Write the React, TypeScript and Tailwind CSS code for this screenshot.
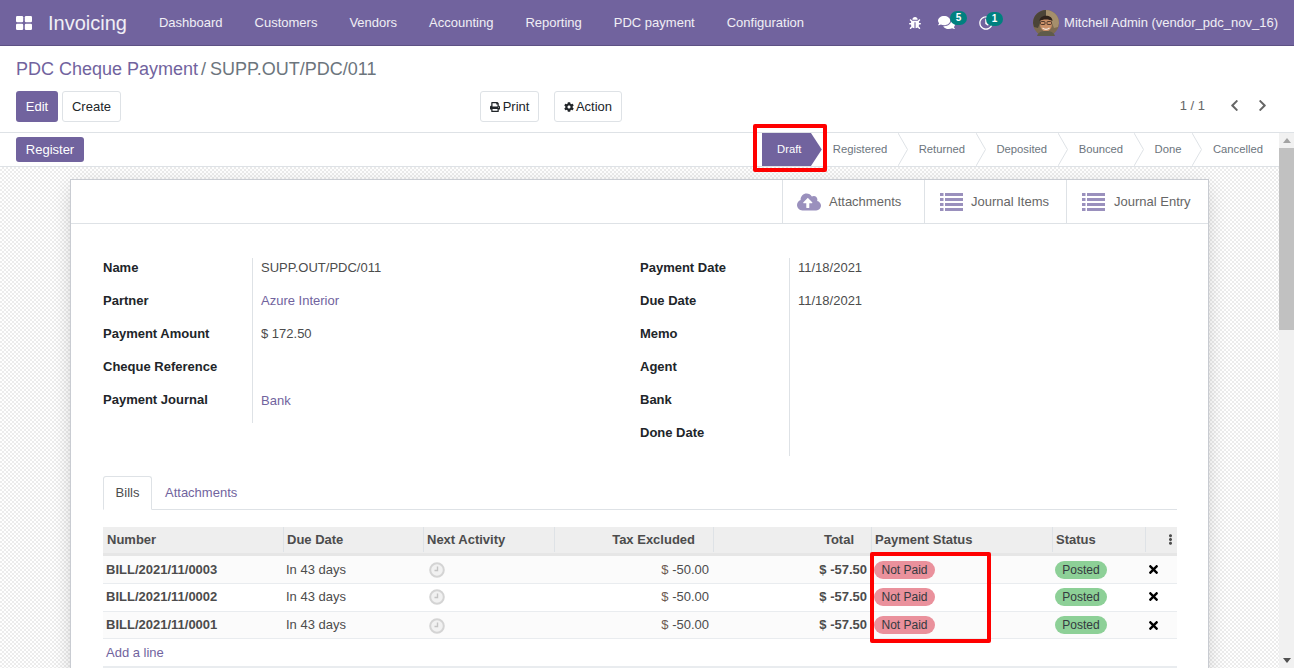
import {
  FaBug,
  FaChevronLeft,
  FaChevronRight,
  FaCloudUploadAlt,
  FaCog,
  FaComments,
  FaEllipsisV,
  FaPrint,
  FaRegClock,
  FaTimes,
} from "react-icons/fa";

const MENU = ["Dashboard", "Customers", "Vendors", "Accounting", "Reporting", "PDC payment", "Configuration"];
const STAGES = ["Registered", "Returned", "Deposited", "Bounced", "Done", "Cancelled"];
const LEFT_FIELDS: [string, string, boolean][] = [
  ["Name", "SUPP.OUT/PDC/011", false],
  ["Partner", "Azure Interior", true],
  ["Payment Amount", "$ 172.50", false],
  ["Cheque Reference", "", false],
  ["Payment Journal", "Bank", true],
];
const RIGHT_FIELDS: [string, string][] = [
  ["Payment Date", "11/18/2021"],
  ["Due Date", "11/18/2021"],
  ["Memo", ""],
  ["Agent", ""],
  ["Bank", ""],
  ["Done Date", ""],
];
const BILLS = [
  { number: "BILL/2021/11/0003", height: "h-[28px]", bg: "bg-[#fbfbfb]" },
  { number: "BILL/2021/11/0002", height: "h-[28px] pb-[2px]", bg: "bg-white" },
  { number: "BILL/2021/11/0001", height: "h-[27px]", bg: "bg-[#fbfbfb]" },
];
const COLS = "grid grid-cols-[180px_140px_131px_159px_158px_181px_93px_32px]";

function AppsIcon() {
  return (
    <svg width="16" height="14" viewBox="0 0 16 14" fill="#fff">
      <rect x="0" y="0" width="7.2" height="6.2" rx="1.2" />
      <rect x="8.8" y="0" width="7.2" height="6.2" rx="1.2" />
      <rect x="0" y="7.8" width="7.2" height="6.2" rx="1.2" />
      <rect x="8.8" y="7.8" width="7.2" height="6.2" rx="1.2" />
    </svg>
  );
}

function Avatar() {
  return (
    <svg width="26" height="26" viewBox="0 0 26 26">
      <circle cx="13" cy="13" r="13" fill="#7d6a50" />
      <path d="M0 13a13 13 0 0 1 13-13v6c-4 0-6 2-6 7l-2 5-4-1z" fill="#4b4438" />
      <path d="M26 13a13 13 0 0 0-13-13v6c4 0 6 2 6 7l2 5 4-1z" fill="#a58f6c" />
      <ellipse cx="13" cy="14" rx="6" ry="7.5" fill="#c98f68" />
      <path d="M6.500 11c0-7 13-7 13 0-3-2-10-2-13 0z" fill="#2f221b" />
      <rect x="7.500" y="11.500" width="4.500" height="3" rx="1" fill="none" stroke="#33251e" strokeWidth="0.8" />
      <rect x="14" y="11.500" width="4.500" height="3" rx="1" fill="none" stroke="#33251e" strokeWidth="0.8" />
      <path d="M9.500 18c2 1.500 5 1.500 7 0" stroke="#f5e9e0" strokeWidth="1.200" fill="none" />
      <path d="M4 26c1-4 5-5 9-5s8 1 9 5z" fill="#5f5b4a" />
    </svg>
  );
}

function ListIcon() {
  return (
    <svg width="23" height="18" viewBox="0 0 23 18" fill="#9a90bd">
      <rect x="0" y="0" width="3.500" height="3" />
      <rect x="5" y="0" width="18" height="3" />
      <rect x="0" y="5" width="3.500" height="3" />
      <rect x="5" y="5" width="18" height="3" />
      <rect x="0" y="10" width="3.500" height="3" />
      <rect x="5" y="10" width="18" height="3" />
      <rect x="0" y="15" width="3.500" height="3" />
      <rect x="5" y="15" width="18" height="3" />
    </svg>
  );
}

function ActivityIcon() {
  return (
    <svg width="16" height="16" viewBox="0 0 16 16">
      <circle cx="8" cy="8" r="6.800" fill="#f1f1f1" stroke="#d4d4d4" strokeWidth="2" />
      <path d="M8.500 4.500v4H5.500" fill="none" stroke="#c4c4c4" strokeWidth="1.400" />
    </svg>
  );
}

function StageChevron() {
  return (
    <svg width="10" height="33" viewBox="0 0 10 33" className="shrink-0">
      <path d="M0 0l9.500 16.500L0 33" fill="none" stroke="#dee2e6" strokeWidth="1" />
    </svg>
  );
}

function BoxButton({ icon, label, className }: { icon: React.ReactNode; label: string; className: string }) {
  return (
    <div className={`w-[142px] h-full border-l border-[#dee2e6] flex items-center text-[#666666] ${className}`}>
      {icon}
      <span>{label}</span>
    </div>
  );
}

function Badge({ value, className }: { value: number; className: string }) {
  return (
    <span
      className={`absolute w-[17px] h-[14px] rounded-full bg-[#00807f] text-white text-[10px] leading-[14px] font-bold text-center ${className}`}
    >
      {value}
    </span>
  );
}

export default function App() {
  return (
    <div className="relative h-[668px] w-[1294px] overflow-hidden flex flex-col bg-white text-[13px] text-[#4c4c4c] font-['Liberation_Sans',Arial,sans-serif]">
      {/* top menu */}
      <header className="h-[46px] shrink-0 bg-[#71639e] border-b border-[#5d5184] flex items-center pl-4 pr-4 text-white/90">
        <AppsIcon />
        <span className="ml-4 text-[20px] mr-4">Invoicing</span>
        <nav className="flex">
          {MENU.map((item) => (
            <span key={item} className="px-4">
              {item}
            </span>
          ))}
        </nav>
        <div className="ml-auto flex items-center">
          <FaBug className="text-white mr-[17px]" size={12} />
          <span className="relative mr-[24px]">
            <FaComments className="text-white" size={17} />
            <Badge value={5} className="-top-[3px] left-[12px]" />
          </span>
          <span className="relative mr-[40px]">
            <FaRegClock className="text-white" size={14} />
            <Badge value={1} className="-top-[4px] left-[7px]" />
          </span>
          <Avatar />
          <span className="ml-[5px]">Mitchell Admin (vendor_pdc_nov_16)</span>
        </div>
      </header>

      {/* control panel */}
      <section className="h-[87px] shrink-0 border-b border-[#dee2e6] px-4">
        <div className="pt-[12px] text-[18px] leading-[22px] text-[#6c757d]">
          <span className="text-[#71639e]">PDC Cheque Payment</span>
          <span className="ml-[3px] mr-[4px]">/</span>
          <span>SUPP.OUT/PDC/011</span>
        </div>
        <div className="mt-[11px] flex items-center">
          <button type="button" className="h-[31px] w-[42px] rounded-[3px] bg-[#71639e] text-white">
            Edit
          </button>
          <button
            type="button"
            className="ml-1 h-[31px] w-[59px] rounded-[3px] bg-white border border-[#dee2e6] text-[#212529]"
          >
            Create
          </button>
          <button
            type="button"
            className="ml-[359px] h-[31px] w-[59px] rounded-[3px] bg-white border border-[#dee2e6] text-[#212529] flex items-center justify-center gap-[3px]"
          >
            <FaPrint size={10} />
            Print
          </button>
          <button
            type="button"
            className="ml-[15px] h-[31px] w-[68px] rounded-[3px] bg-white border border-[#dee2e6] text-[#212529] flex items-center justify-center gap-[2px]"
          >
            <FaCog size={10} />
            Action
          </button>
          <div className="ml-auto -mt-[2px] flex items-center text-[#666666] pr-[9px]">
            <span className="mr-[23px]">1 / 1</span>
            <FaChevronLeft size={13} className="mr-[15px]" />
            <FaChevronRight size={13} />
          </div>
        </div>
      </section>

      <div className="flex-1 min-h-0 flex">
        <div className="flex-1 min-w-0 flex flex-col">
          {/* status bar */}
          <div className="h-[34px] shrink-0 border-b border-[#dee2e6] flex items-center pl-4">
            <button type="button" className="h-[25px] w-[68px] rounded-[3px] bg-[#71639e] text-white">
              Register
            </button>
            <div className="ml-auto flex items-center h-full text-[11.25px] text-[#6c757d] pr-4">
              <span className="w-[60px] h-full bg-[#71639e] text-white flex items-center justify-center pr-[5px] [clip-path:polygon(0_0,82%_0,100%_50%,82%_100%,0_100%)] mr-[11px]">
                Draft
              </span>
              {STAGES.map((stage, i) => (
                <div key={stage} className="flex items-center h-full">
                  <span>{stage}</span>
                  {i < STAGES.length - 1 && (
                    <span className="mx-[10.75px]">
                      <StageChevron />
                    </span>
                  )}
                </div>
              ))}
            </div>
          </div>

          {/* form */}
          <div className="flex-1 min-h-0 overflow-hidden pt-[12px] px-[70px] bg-[repeating-conic-gradient(#ececec_0%_25%,#ffffff_0%_50%)] bg-[length:4px_4px]">
            <div className="bg-white border border-[#c9ccd2] shadow-[0_5px_20px_-5px_rgba(0,0,0,0.25)]">
              <div className="h-[44px] border-b border-[#dee2e6] flex justify-end">
                <BoxButton
                  icon={<FaCloudUploadAlt size={24} className="text-[#9a90bd]" />}
                  label="Attachments"
                  className="pl-[14px] gap-2"
                />
                <BoxButton icon={<ListIcon />} label="Journal Items" className="pl-[15px] gap-2" />
                <BoxButton icon={<ListIcon />} label="Journal Entry" className="pl-[15px] gap-[9px]" />
              </div>

              <div className="pt-[34px] pl-[32px] pr-[31px]">
                <div className="flex">
                  <div className="w-[537px]">
                    {LEFT_FIELDS.map(([label, value, link]) => (
                      <div key={label} className="flex h-[33px] leading-[20px]">
                        <div className="w-[150px] font-bold text-[#212529] border-r border-[#dee2e6]">{label}</div>
                        <div className={`pl-2 ${link ? "text-[#71639e]" : ""} ${value === "Bank" ? "pt-px" : ""}`}>{value}</div>
                      </div>
                    ))}
                  </div>
                  <div>
                    {RIGHT_FIELDS.map(([label, value]) => (
                      <div key={label} className="flex h-[33px] leading-[20px]">
                        <div className="w-[150px] font-bold text-[#212529] border-r border-[#dee2e6]">{label}</div>
                        <div className="pl-2">{value}</div>
                      </div>
                    ))}
                  </div>
                </div>

                <div className="mt-[20px] h-[34px] border-b border-[#dee2e6] flex">
                  <div className="w-[49px] h-[34px] bg-white border border-[#dee2e6] border-b-white rounded-t-[3px] flex items-center justify-center">
                    Bills
                  </div>
                  <div className="ml-[13px] h-full flex items-center text-[#71639e]">Attachments</div>
                </div>

                <div className="mt-[17px]">
                  <div className={`${COLS} h-[29px] pb-px bg-[#eeeeee] border-b-[3px] border-[#e6e6e6] font-bold text-[#4c4c4c]`}>
                    <div className="pl-1 flex items-center">Number</div>
                    <div className="pl-[3px] flex items-center border-l border-[#dee2e6]">Due Date</div>
                    <div className="pl-[3px] flex items-center border-l border-[#dee2e6]">Next Activity</div>
                    <div className="pr-[18px] flex items-center justify-end border-l border-[#dee2e6]">Tax Excluded</div>
                    <div className="pr-[17px] flex items-center justify-end border-l border-[#dee2e6]">Total</div>
                    <div className="pl-[3px] flex items-center border-l border-[#dee2e6]">Payment Status</div>
                    <div className="pl-[3px] flex items-center border-l border-[#dee2e6]">Status</div>
                    <div className="flex items-center justify-end pr-px border-l border-[#dee2e6]">
                      <FaEllipsisV size={11} />
                    </div>
                  </div>
                  {BILLS.map((bill) => (
                    <div
                      key={bill.number}
                      className={`${COLS} ${bill.height} ${bill.bg} items-center border-b border-[#e9ecef]`}
                    >
                      <div className="pl-[3px] font-bold">{bill.number}</div>
                      <div className="pl-[3px]">In 43 days</div>
                      <div className="pl-[6px] pt-px">
                        <ActivityIcon />
                      </div>
                      <div className="pr-[4px] text-right">
                        <span className="text-[#6e5a54]">$</span> -50.00
                      </div>
                      <div className="pr-[4px] text-right font-bold">$ -57.50</div>
                      <div className="pl-[3px] flex items-center">
                        <span className="h-[18px] leading-[18px] w-[61px] text-center rounded-full bg-[#ea919c] text-[12px] text-[#343a40]">
                          Not Paid
                        </span>
                      </div>
                      <div className="pl-[3px] flex items-center">
                        <span className="h-[18px] leading-[18px] w-[52px] text-center rounded-full bg-[#8dd097] text-[12px] text-[#343a40]">
                          Posted
                        </span>
                      </div>
                      <div className="pl-[2px] text-black">
                        <FaTimes size={13} />
                      </div>
                    </div>
                  ))}
                  <div className="h-[29px] pl-[3px] flex items-center text-[#71639e] border-b-2 border-[#e9ecef]">
                    Add a line
                  </div>
                  <div className="h-[40px]" />
                </div>
              </div>
            </div>
          </div>
        </div>

        {/* scrollbar */}
        <div className="w-[15px] shrink-0 bg-[#f1f1f1] flex flex-col items-center">
          <div className="h-[15px] flex items-center justify-center">
            <div className="w-0 h-0 border-x-[4px] border-x-transparent border-b-[5px] border-b-[#a3a3a3]" />
          </div>
          <div className="w-full h-[182px] bg-[#c1c1c1]" />
          <div className="mt-auto h-[15px] flex items-center justify-center">
            <div className="w-0 h-0 border-x-[4px] border-x-transparent border-t-[5px] border-t-[#505050]" />
          </div>
        </div>
      </div>

      {/* red annotation boxes */}
      <div className="absolute left-[753px] top-[124px] w-[74px] h-[48px] border-4 border-[#ff0000] rounded-[2px]" />
      <div className="absolute left-[870px] top-[552px] w-[121px] h-[91px] border-4 border-[#ff0000] rounded-[2px]" />
    </div>
  );
}
